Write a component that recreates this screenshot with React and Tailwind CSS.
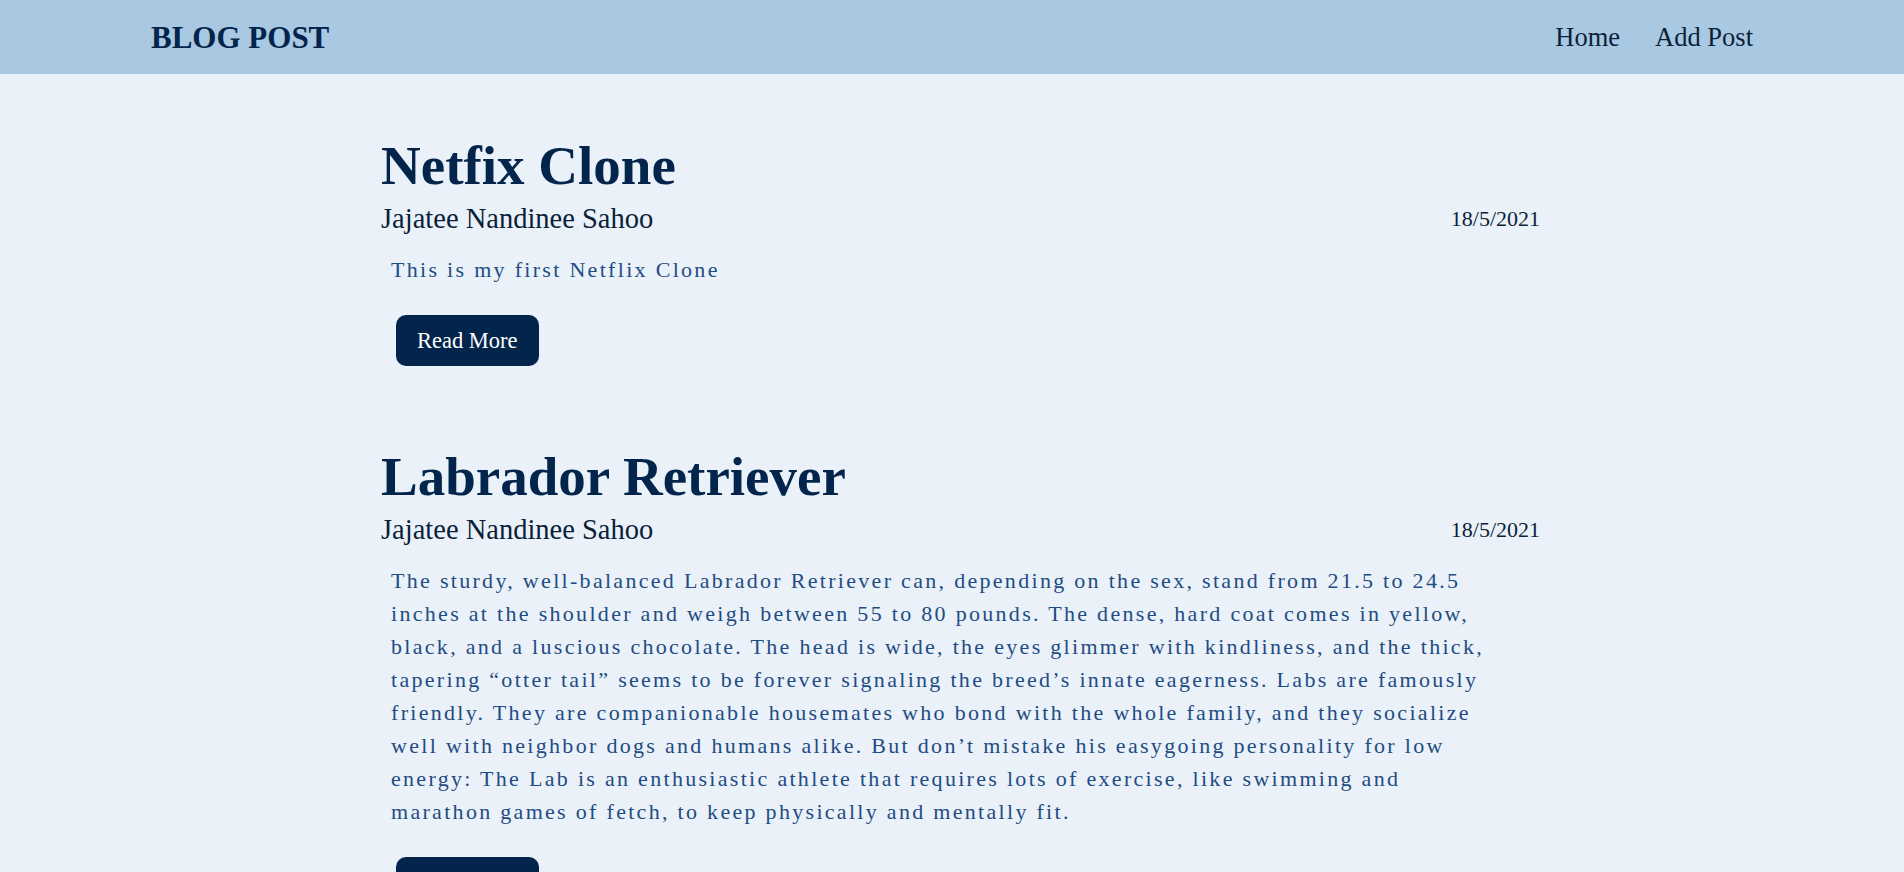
import React from "react";

const posts = [
  {
    title: "Netfix Clone",
    author: "Jajatee Nandinee Sahoo",
    date: "18/5/2021",
    body: "This is my first Netflix Clone",
  },
  {
    title: "Labrador Retriever",
    author: "Jajatee Nandinee Sahoo",
    date: "18/5/2021",
    body:
      "The sturdy, well-balanced Labrador Retriever can, depending on the sex, stand from 21.5 to 24.5 inches at the shoulder and weigh between 55 to 80 pounds. The dense, hard coat comes in yellow, black, and a luscious chocolate. The head is wide, the eyes glimmer with kindliness, and the thick, tapering \u201cotter tail\u201d seems to be forever signaling the breed\u2019s innate eagerness. Labs are famously friendly. They are companionable housemates who bond with the whole family, and they socialize well with neighbor dogs and humans alike. But don\u2019t mistake his easygoing personality for low energy: The Lab is an enthusiastic athlete that requires lots of exercise, like swimming and marathon games of fetch, to keep physically and mentally fit.",
  },
];

export default function App() {
  return (
    <div
      className="min-h-screen bg-[#eaf1f9] text-[#03254c]"
      style={{ fontFamily: '"Liberation Serif", "Times New Roman", serif' }}
    >
      <header className="h-[74px] bg-[#a9c8e2] flex items-center justify-between px-[151px]">
        <div className="text-[31px] font-bold text-[#03254c] leading-none">BLOG POST</div>
        <nav className="flex items-center gap-[35px] text-[26.5px] text-[#0b1f38] leading-none">
          <a href="#">Home</a>
          <a href="#">Add Post</a>
        </nav>
      </header>

      <main className="pl-[381px] pr-[364px] pt-[62px] flex flex-col gap-[81px]">
        {posts.map((p, i) => (
          <article key={i} className="flex flex-col">
            <h1 className="text-[55px] font-bold leading-[60px] text-[#03254c]">{p.title}</h1>
            <div className="mt-[6px] flex items-center justify-between leading-[34px]">
              <span className="text-[28.5px] text-[#0b1f38]">{p.author}</span>
              <span className="text-[22px] text-[#0b1f38]">{p.date}</span>
            </div>
            <p className="mt-[17px] pl-[10px] pr-[38px] text-[22px] leading-[33px] tracking-[2.3px] text-[#1f4c82]">
              {p.body}
            </p>
            <div className="mt-[29px] pl-[15px]">
              <button className="h-[51px] px-[21px] rounded-[10px] bg-[#03254c] text-white text-[22.5px]">
                Read More
              </button>
            </div>
          </article>
        ))}
      </main>
    </div>
  );
}
